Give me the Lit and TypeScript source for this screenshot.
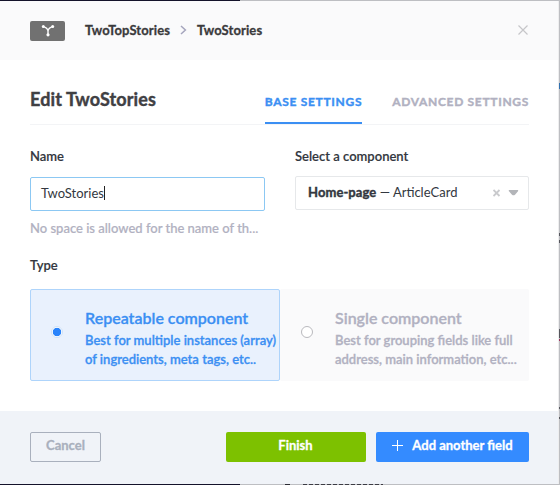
import { LitElement, html, css, svg } from "lit";
import { customElement, property } from "lit/decorators.js";

@customElement("type-option")
class TypeOption extends LitElement {
  @property() heading = "";
  @property({ attribute: false }) lines: string[] = [];
  @property({ type: Boolean, reflect: true }) checked = false;

  static styles = css`
    :host {
      display: flex;
      box-sizing: border-box;
      height: 92px;
      border: 1px solid #fafafb;
      border-radius: 2px;
      background: #fafafb;
      color: #b1b1c1;
    }
    :host([checked]) {
      border-color: #aed4fb;
      background: #e9f1fd;
      color: #3b8ff3;
    }
    .mark {
      flex: none;
      width: 54px;
      padding: 36px 0 0 20px;
      box-sizing: border-box;
    }
    .radio {
      display: block;
      box-sizing: border-box;
      width: 12px;
      height: 12px;
      border: 1px solid #b9b9be;
      border-radius: 50%;
      background: #fff;
    }
    :host([checked]) .radio {
      border-color: #cfe2f8;
      background: radial-gradient(circle, #2a84fb 3.8px, #fff 4.6px);
    }
    .text {
      padding-top: 17px;
      white-space: nowrap;
    }
    .heading {
      font-size: 16px;
      font-weight: 600;
      line-height: 21px;
      padding-bottom: 3px;
      -webkit-text-stroke: 0.3px currentColor;
    }
    .line {
      font-size: 13px;
      font-weight: 600;
      line-height: 19px;
      -webkit-text-stroke: 0.3px currentColor;
    }
  `;

  render() {
    return html`
      <div class="mark"><span class="radio"></span></div>
      <div class="text">
        <div class="heading">${this.heading}</div>
        ${this.lines.map((l) => html`<div class="line">${l}</div>`)}
      </div>
    `;
  }
}

const componentIcon = svg`
  <path d="M2 2.6 Q6.6 3.6 7 7 V11 M12 2.6 Q7.4 3.6 7 7" fill="none" stroke="#fff" stroke-width="1.4"/>
  <circle cx="2.3" cy="2.6" r="1.5" fill="#fff"/>
  <circle cx="11.7" cy="2.6" r="1.5" fill="#fff"/>
  <circle cx="7" cy="10.8" r="1.6" fill="#fff"/>`;

@customElement("app-root")
class AppRoot extends LitElement {
  static styles = css`
    :host {
      display: block;
      box-sizing: border-box;
      width: 560px;
      height: 485px;
      overflow: hidden;
      padding: 1px 1px 0 0;
      background:
        linear-gradient(#2f6fae, #2f6fae) 559px 83px / 1px 6px no-repeat,
        linear-gradient(#55565c, #55565c) 559px 233px / 1px 3px no-repeat,
        linear-gradient(#55565c, #55565c) 559px 240px / 1px 3px no-repeat,
        linear-gradient(#55565c, #55565c) 559px 329px / 1px 9px no-repeat,
        linear-gradient(#a0325a, #a0325a) 559px 339px / 1px 2px no-repeat,
        linear-gradient(#55565c, #55565c) 559px 407px / 1px 2px no-repeat,
        linear-gradient(#55565c, #55565c) 559px 417px / 1px 2px no-repeat,
        linear-gradient(#2b2b33, #2b2b33) 285px 484px / 5px 1px no-repeat,
        repeating-linear-gradient(90deg, #3c3c44 0 4px, #b9bac0 4px 6px) 303px 484px / 80px 1px no-repeat,
        linear-gradient(90deg, #14122a 240px, #bdbec2 240px);
      font-family: Lato, "Liberation Sans", sans-serif;
      font-size: 13px;
      color: #333740;
    }
    .modal {
      height: 483px;
      display: flex;
      flex-direction: column;
      background: #fff;
      box-sizing: border-box;
      border-right: 1px solid #eeeeef;
    }
    header {
      flex: none;
      height: 59px;
      box-sizing: border-box;
      padding: 0 30px 0 30px;
      display: flex;
      align-items: center;
      background: #fafafb;
      font-weight: 700;
      color: #3a3a3c;
    }
    header > :not(.badge) { margin-bottom: 2px; }
    .crumb { letter-spacing: 0.1px; -webkit-text-stroke: 0.3px currentColor; }
    .badge {
      width: 35px;
      height: 20px;
      margin-right: 20px;
      border-radius: 2px;
      background: #717171;
      display: flex;
      align-items: center;
      justify-content: center;
    }
    .chevron { margin-left: 10px; margin-right: 10px; }
    .close { margin-left: auto; }
    main {
      flex: 1;
      padding: 0 29px 0 30px;
    }
    .title-row {
      display: flex;
      align-items: flex-end;
      height: 65px;
      box-sizing: border-box;
      border-bottom: 1px solid #f3f4f6;
    }
    h1 {
      margin: 0 auto 0 0;
      font-size: 18px;
      line-height: 22px;
      padding-bottom: 14px;
      font-weight: 700;
      letter-spacing: 0.12px;
      color: #3f4043;
      -webkit-text-stroke: 0.4px currentColor;
    }
    .tab {
      font-size: 12px;
      font-weight: 700;
      letter-spacing: 0.68px;
      line-height: 16px;
      padding-bottom: 12px;
      border-bottom: 2px solid transparent;
      color: #b1b1c1;
      -webkit-text-stroke: 0.4px currentColor;
    }
    .tab.active {
      color: #3b8ff3;
      border-color: #3b8ff3;
      margin-right: 30px;
    }
    .fields {
      display: grid;
      grid-template-columns: 235px 234px;
      column-gap: 30px;
      padding-top: 23px;
    }
    .label {
      font-weight: 600;
      line-height: 16px;
      -webkit-text-stroke: 0.15px currentColor;
    }
    .input, .select {
      box-sizing: border-box;
      height: 34px;
      display: flex;
      align-items: center;
      border-radius: 2px;
    }
    .input {
      margin-top: 13px;
      padding: 0 10px 2px;
      border: 1px solid #8cc8f3;
    }
    .caret {
      width: 1px;
      height: 14px;
      background: #222;
    }
    .select {
      margin-top: 12px;
      padding: 0 9px 2px 12px;
      border: 1px solid #e6e8ea;
      white-space: pre;
    }
    .select b { letter-spacing: 0.08px; -webkit-text-stroke: 0.4px currentColor; }
    .select svg { margin-left: auto; margin-bottom: -1px; }
    .hint {
      margin-top: 9px;
      line-height: 17px;
      color: #b1b1c1;
      font-weight: 500;
      white-space: nowrap;
      -webkit-text-stroke: 0.2px currentColor;
    }
    .type-label { margin-top: 20px; }
    .options {
      display: grid;
      grid-template-columns: 250px 249px;
      margin-top: 16px;
    }
    footer {
      flex: none;
      height: 73px;
      box-sizing: border-box;
      padding: 21px 29px 0 30px;
      display: flex;
      background: #f0f3f8;
    }
    .button {
      height: 30px;
      box-sizing: border-box;
      border-radius: 2px;
      display: flex;
      align-items: center;
      justify-content: center;
      padding-bottom: 4px;
      font-weight: 700;
      color: #fff;
      -webkit-text-stroke: 0.3px currentColor;
    }
    .cancel {
      width: 71px;
      border: 1px solid #a9b0bd;
      color: #a9b0bd;
      margin-right: auto;
    }
    .finish { width: 140px; padding-right: 1px; background: #7dc100; }
    .add { width: 153px; background: #348bff; margin-left: 10px; }
    .add svg { margin-right: 9px; }
  `;

  render() {
    return html`
      <div class="modal">
        <header>
          <span class="badge"><svg width="14" height="14" viewBox="0 0 14 14">${componentIcon}</svg></span>
          <span class="crumb">TwoTopStories</span>
          <svg class="chevron" width="7" height="10" viewBox="0 0 7 10"><path d="M1 1 5.4 5 1 9" fill="none" stroke="#a5a5bd" stroke-width="1.5"/></svg>
          <span class="crumb">TwoStories</span>
          <svg class="close" width="10" height="10" viewBox="0 0 10 10"><path d="M.5.5 9.5 9.5M9.5.5.5 9.5" stroke="#c6c6c9" stroke-width="1.2"/></svg>
        </header>
        <main>
          <div class="title-row">
            <h1>Edit TwoStories</h1>
            <span class="tab active">BASE SETTINGS</span>
            <span class="tab">ADVANCED SETTINGS</span>
          </div>
          <div class="fields">
            <div>
              <div class="label">Name</div>
              <div class="input"><span>TwoStories</span><span class="caret"></span></div>
              <div class="hint">No space is allowed for the name of th...</div>
            </div>
            <div>
              <div class="label">Select a component</div>
              <div class="select"><b>Home-page</b><span> — ArticleCard</span>
                <svg width="26" height="8" viewBox="0 0 26 8"><path d="M.5 1 6.5 7M6.5 1 .5 7" stroke="#c9cacd" stroke-width="1.8"/><path d="M16 1h9q.6.8-.2 1.6L22 5.8q-1.5 1-3 0L16.2 2.6Q15.4 1.8 16 1" fill="#b3b5b9"/></svg></div>
            </div>
          </div>
          <div class="label type-label">Type</div>
          <div class="options">
            <type-option checked heading="Repeatable component" .lines=${["Best for multiple instances (array)", "of ingredients, meta tags, etc.."]}></type-option>
            <type-option heading="Single component" .lines=${["Best for grouping fields like full", "address, main information, etc..."]}></type-option>
          </div>
        </main>
        <footer>
          <span class="button cancel">Cancel</span>
          <span class="button finish">Finish</span>
          <span class="button add"><svg width="11" height="11" viewBox="0 0 11 11"><path d="M5.5 0V11M0 5.5H11" stroke="#fff"/></svg>Add another field</span>
        </footer>
      </div>
    `;
  }
}
